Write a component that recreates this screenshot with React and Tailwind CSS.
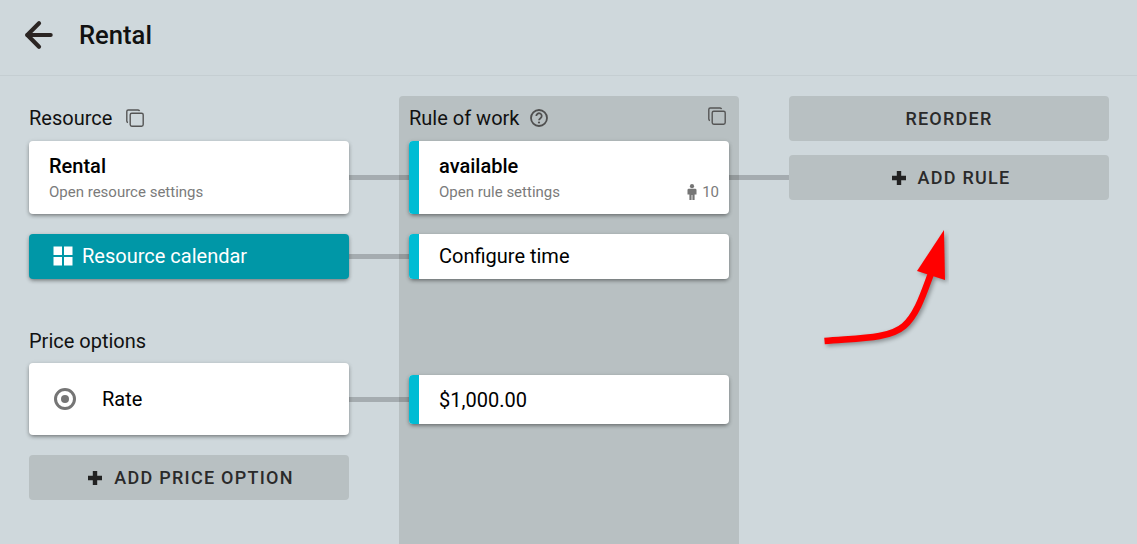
import React from "react";
import { ArrowLeft } from "lucide-react";

const cardShadow = "shadow-[0_2px_4px_-1px_rgba(0,0,0,0.45),0_1px_5px_rgba(0,0,0,0.12)]";

const CopyIcon = () => (
  <svg width="20" height="20" viewBox="0 0 20 20" fill="none" stroke="#555" strokeWidth="1.4">
    <path d="M3 14.5 a1.5 1.5 0 0 1 -1.2 -1.5 V3.5 A1.5 1.5 0 0 1 3.3 2 H13 a1.5 1.5 0 0 1 1.5 1.2" />
    <rect x="5.2" y="5.2" width="13" height="13" rx="1.6" />
  </svg>
);

const HelpIcon = () => (
  <svg width="20" height="20" viewBox="0 0 20 20" fill="none">
    <circle cx="10" cy="10" r="8" stroke="#4f4f4f" strokeWidth="1.8" />
    <path d="M7.3 8 a2.7 2.7 0 1 1 4.2 2.2 c-1 .7 -1.5 1.1 -1.5 2.1" stroke="#4f4f4f" strokeWidth="1.8" />
    <circle cx="10" cy="14.5" r="1.1" fill="#4f4f4f" />
  </svg>
);

const PersonIcon = () => (
  <svg width="10" height="16" viewBox="0 0 10 16" fill="#757575">
    <circle cx="5" cy="2.2" r="2.1" />
    <path d="M1.8 4.8 H8.2 A1.3 1.3 0 0 1 9.5 6.1 V10.5 H7.6 V16 H5.4 V11 H4.6 V16 H2.4 V10.5 H.5 V6.1 A1.3 1.3 0 0 1 1.8 4.8 Z" />
  </svg>
);

const GridIcon = () => (
  <svg width="20" height="20" viewBox="0 0 20 20" fill="#fff">
    <rect x="0.5" y="0.5" width="8.5" height="8.5" />
    <rect x="11" y="0.5" width="8.5" height="8.5" />
    <rect x="0.5" y="11" width="8.5" height="8.5" />
    <rect x="11" y="11" width="8.5" height="8.5" />
  </svg>
);

const PlusIcon = () => (
  <svg width="14" height="14" viewBox="0 0 14 14" fill="#222">
    <path d="M4.8 0 H9.2 V4.8 H14 V9.2 H9.2 V14 H4.8 V9.2 H0 V4.8 H4.8 Z" />
  </svg>
);

// connector line sticking out of the right side of a card
const Connector = () => (
  <div className="absolute top-[calc(50%-2.5px)] left-full h-[5px] w-[60px] bg-black/20" />
);

const RuleCard = ({ height, children, line }) => (
  <div className={`relative z-10 flex ${height} rounded bg-white ${cardShadow}`}>
    <div className="w-2.5 shrink-0 rounded-l bg-[#00bcd4]" />
    <div className="relative flex-1 pl-5 pr-2.5">{children}</div>
    {line && <Connector />}
  </div>
);

const GreyButton = ({ icon, children }) => (
  <button className={`flex h-[45px] w-full items-center justify-center gap-3 rounded bg-[#b8c0c2] text-lg font-medium tracking-[1.25px] text-[#2a2a2a] ${icon ? "pl-1" : ""}`}>
    {icon && <PlusIcon />}
    {children}
  </button>
);

export default function App() {
  return (
    <div className="flex h-[544px] flex-col overflow-hidden bg-[#cfd8dc] font-['Roboto',sans-serif] text-black">
      <header className="flex h-[76px] shrink-0 items-center border-b border-[#c5ced2] pb-1.5 pl-[19px]">
        <ArrowLeft size={40} strokeWidth={2.5} className="text-[#2b2523]" />
        <h1 className="ml-5 text-[25.6px] leading-7 font-medium text-[#111]">Rental</h1>
      </header>

      <main className="flex flex-1 gap-[50px] pt-5 pl-[29px]">
        {/* Resource column */}
        <section className="w-[320px]">
          <div className="flex h-[45px] items-center gap-[13px] pb-0.5">
            <span className="text-xl leading-6 text-[#111]">Resource</span>
            <CopyIcon />
          </div>
          <div className={`relative z-0 h-[73px] rounded bg-white pl-5 ${cardShadow}`}>
            <div className="pt-[13px] text-xl leading-6 font-medium">Rental</div>
            <div className="mt-1 text-[15px] leading-5 text-[#7b7b7b]">Open resource settings</div>
            <Connector />
          </div>
          <div className={`relative mt-5 flex h-[45px] items-center rounded bg-[#0097a7] pb-0.5 pl-6 text-white ${cardShadow}`}>
            <GridIcon />
            <span className="ml-[9px] text-xl">Resource calendar</span>
            <Connector />
          </div>
          <div className="mt-[45px] flex h-[39px] items-center pb-[5px] text-xl leading-6 text-[#111]">Price options</div>
          <div className={`relative flex h-[72px] items-center rounded bg-white pl-[25px] ${cardShadow}`}>
            <div className="flex size-[22px] items-center justify-center rounded-full border-[3px] border-[#757575]">
              <div className="size-2 rounded-full bg-[#757575]" />
            </div>
            <span className="ml-[26px] text-xl">Rate</span>
            <Connector />
          </div>
          <div className="mt-5">
            <GreyButton icon>ADD PRICE OPTION</GreyButton>
          </div>
        </section>

        {/* Rule of work column */}
        <section className="w-[340px] rounded-t bg-[#b8c0c2] px-2.5">
          <div className="flex h-[45px] items-center pr-0.5 pb-0.5">
            <span className="text-xl leading-6 text-[#111]">Rule of work</span>
            <span className="ml-2.5"><HelpIcon /></span>
            <span className="mb-1 ml-auto"><CopyIcon /></span>
          </div>
          <RuleCard height="h-[73px]" line>
            <div className="pt-[13px] text-xl leading-6 font-medium">available</div>
            <div className="mt-1 text-[15px] leading-5 text-[#7b7b7b]">Open rule settings</div>
            <div className="absolute right-2.5 bottom-3 flex items-center gap-[5px] text-[15px] leading-5 text-[#7b7b7b]">
              <PersonIcon />
              <span>10</span>
            </div>
          </RuleCard>
          <div className="mt-5">
            <RuleCard height="h-[45px]">
              <div className="flex h-full items-center pb-0.5 text-xl">Configure time</div>
            </RuleCard>
          </div>
          <div className="mt-24">
            <RuleCard height="h-[49px]">
              <div className="flex h-full items-center text-xl">$1,000.00</div>
            </RuleCard>
          </div>
        </section>

        {/* Actions column */}
        <section className="relative w-[320px]">
          <GreyButton>REORDER</GreyButton>
          <div className="mt-3.5">
            <GreyButton icon>ADD RULE</GreyButton>
          </div>
          {/* red annotation arrow drawn on the screenshot */}
          <svg className="absolute top-[130px] left-[30px]" width="130" height="125" viewBox="0 0 130 125" fill="none">
            <g className="drop-shadow-[2px_2px_2px_rgba(0,0,0,0.35)]">
              <path d="M5.5 115 C40 112 70 113 85 100 C99 88 106 63 113 45" stroke="#ff0000" strokeWidth="6.5" />
              <path d="M125 4 L126 54 L98 45 Z" fill="#ff0000" />
            </g>
          </svg>
        </section>
      </main>
    </div>
  );
}
